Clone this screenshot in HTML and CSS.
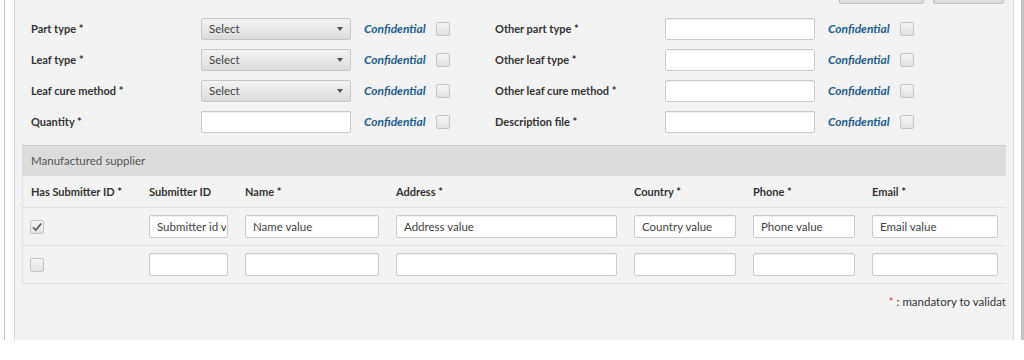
FILE: index.html
```html
<!DOCTYPE html>
<html lang="en">
<head>
  <meta charset="UTF-8" />
  <title>Part details</title>
  <link rel="stylesheet" href="styles.css">
</head>
<body>

  <div class="frame">
    <div class="panel">

      <div class="toolbar">
        <button class="tool-btn wide" type="button" aria-label="Save"></button>
        <button class="tool-btn" type="button" aria-label="Cancel"></button>
      </div>

      <!-- Part fields -->
      <div class="part-form">
        <label class="field-label">Part type *</label>
        <div class="select-box">Select<span class="caret"></span></div>
        <span class="conf">Confidential</span>
        <span class="check"></span>
        <label class="field-label">Other part type *</label>
        <input class="text-input" type="text">
        <span class="conf">Confidential</span>
        <span class="check"></span>

        <label class="field-label">Leaf type *</label>
        <div class="select-box">Select<span class="caret"></span></div>
        <span class="conf">Confidential</span>
        <span class="check"></span>
        <label class="field-label">Other leaf type *</label>
        <input class="text-input" type="text">
        <span class="conf">Confidential</span>
        <span class="check"></span>

        <label class="field-label">Leaf cure method *</label>
        <div class="select-box">Select<span class="caret"></span></div>
        <span class="conf">Confidential</span>
        <span class="check"></span>
        <label class="field-label">Other leaf cure method *</label>
        <input class="text-input" type="text">
        <span class="conf">Confidential</span>
        <span class="check"></span>

        <label class="field-label">Quantity *</label>
        <input class="text-input" type="text">
        <span class="conf">Confidential</span>
        <span class="check"></span>
        <label class="field-label">Description file *</label>
        <input class="text-input" type="text">
        <span class="conf">Confidential</span>
        <span class="check"></span>
      </div>

      <!-- Supplier table -->
      <div class="supplier">
        <div class="supplier-title">Manufactured supplier</div>

        <div class="supplier-row head">
          <span>Has Submitter ID *</span>
          <span>Submitter ID</span>
          <span>Name *</span>
          <span>Address *</span>
          <span>Country *</span>
          <span>Phone *</span>
          <span>Email *</span>
        </div>

        <div class="supplier-row">
          <span class="check checked">
            <svg viewBox="0 0 14 14" width="14" height="14"><path d="M3 7.2 L5.8 10 L11.2 3.6" fill="none" stroke="#555" stroke-width="1.6"/></svg>
          </span>
          <input class="text-input" type="text" value="Submitter id value">
          <input class="text-input" type="text" value="Name value">
          <input class="text-input" type="text" value="Address value">
          <input class="text-input" type="text" value="Country value">
          <input class="text-input" type="text" value="Phone value">
          <input class="text-input" type="text" value="Email value">
        </div>

        <div class="supplier-row">
          <span class="check"></span>
          <input class="text-input" type="text">
          <input class="text-input" type="text">
          <input class="text-input" type="text">
          <input class="text-input" type="text">
          <input class="text-input" type="text">
          <input class="text-input" type="text">
        </div>
      </div>

      <div class="legend">
        <span class="legend-text"><span class="star">*</span> : mandatory to validate</span>
      </div>

    </div>
  </div>

</body>
</html>
```

FILE: styles.css
```css
* { margin: 0; padding: 0; box-sizing: border-box; }
html, body {
  height: 100%;
  overflow: hidden;
  background: #fff;
  font-family: Lato, 'Noto Sans', sans-serif;
  font-size: 11.5px;
  color: #333;
}

.frame {
  height: 100%;
  margin-left: 4px;
  border-left: 1px solid #c4c4c4;
  border-right: 3px solid #c4c4c4;
  padding: 0 7px 0 9px;
}

.panel {
  height: 100%;
  background: #f3f3f3;
  border-left: 1px solid #d9d9d9;
  border-right: 1px solid #d9d9d9;
}

/* top buttons, mostly scrolled out of view */
.toolbar {
  display: flex;
  justify-content: flex-end;
  gap: 9px;
  padding-right: 9px;
  margin-top: -20px;
  height: 24px;
}

.tool-btn {
  width: 71px;
  height: 24px;
  border: 1px solid #c2c2c2;
  border-radius: 2px;
  background: linear-gradient(#ececec, #dcdcdc);
}

.tool-btn.wide { width: 85px; }

.part-form {
  display: grid;
  grid-template-columns: 170px 150px 85px 59px 170px 150px 85px 14px;
  grid-auto-rows: 31px;
  align-items: center;
  padding-left: 16px;
  margin-top: 9px;
}

.field-label {
  font-size: 11px;
  font-weight: bold;
  color: #333;
}

.select-box {
  position: relative;
  height: 22px;
  line-height: 20px;
  padding-left: 7px;
  border: 1px solid #c6c6c6;
  border-radius: 2px;
  background: linear-gradient(#f2f2f2, #dcdcdc);
  color: #444;
}

.caret {
  position: absolute;
  right: 7px;
  top: 8px;
  border-left: 3px solid transparent;
  border-right: 3px solid transparent;
  border-top: 4px solid #555;
}

.text-input {
  display: block;
  width: 100%;
  height: 23px;
  padding: 0 1px 0 7px;
  border: 1px solid #cbcbcb;
  border-radius: 2px;
  background: #fff;
  box-shadow: inset 0 1px 1px rgba(0, 0, 0, 0.06);
  font: inherit;
  color: #444;
  outline: none;
}

.part-form .text-input { height: 22px; }

.conf {
  padding-left: 13px;
  font-size: 12px;
  font-weight: bold;
  font-style: italic;
  color: #1f5d8e;
}

.check {
  display: block;
  width: 14px;
  height: 14px;
  border: 1px solid #c6c6c6;
  border-radius: 2px;
  background: linear-gradient(#f6f6f6, #e2e2e2);
}

.check svg { display: block; margin: -1px; }

.supplier {
  margin: 8px 7px 0 7px;
}

.supplier-title {
  height: 31px;
  line-height: 30px;
  padding-left: 9px;
  background: #dcdcdc;
  border-top: 1px solid #cacaca;
  color: #555;
}

.supplier-row {
  display: grid;
  grid-template-columns: 101px 79px 134px 221px 102px 102px 126px;
  column-gap: 17px;
  align-items: center;
  height: 38px;
  padding: 0 7px 0 8px;
  border-left: 1px solid #e2e2e2;
  border-bottom: 1px solid #e2e2e2;
}

.supplier-row.head {
  height: 32px;
  font-size: 11px;
  font-weight: bold;
  white-space: nowrap;
}

.supplier-row .check { margin-left: -1px; }

.legend {
  margin: 11px 7px 0 0;
  display: flex;
  justify-content: flex-end;
  overflow: hidden;
}

.legend-text {
  white-space: nowrap;
  margin-right: -6px;
  color: #333;
}

.star { color: #e0413c; }
```
